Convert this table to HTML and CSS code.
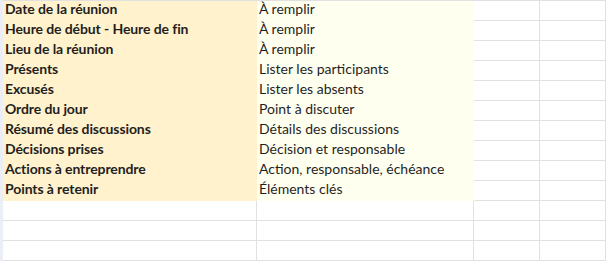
FILE: index.html
```html
<!DOCTYPE html>
<html lang="fr">
<head>
<meta charset="utf-8">
<link rel="stylesheet" href="styles.css">
</head>
<body>
<div class="sheet">
  <div class="strip"></div>
  <table class="grid">
    <colgroup>
      <col class="col-a"><col class="col-b"><col class="col-c"><col class="col-d">
    </colgroup>
    <tbody>
      <tr><td class="key">Date de la réunion</td><td class="val">À remplir</td><td></td><td></td></tr>
      <tr><td class="key">Heure de début - Heure de fin</td><td class="val">À remplir</td><td></td><td></td></tr>
      <tr><td class="key">Lieu de la réunion</td><td class="val">À remplir</td><td></td><td></td></tr>
      <tr><td class="key">Présents</td><td class="val">Lister les participants</td><td></td><td></td></tr>
      <tr><td class="key">Excusés</td><td class="val">Lister les absents</td><td></td><td></td></tr>
      <tr><td class="key">Ordre du jour</td><td class="val">Point à discuter</td><td></td><td></td></tr>
      <tr><td class="key">Résumé des discussions</td><td class="val">Détails des discussions</td><td></td><td></td></tr>
      <tr><td class="key">Décisions prises</td><td class="val">Décision et responsable</td><td></td><td></td></tr>
      <tr><td class="key">Actions à entreprendre</td><td class="val">Action, responsable, échéance</td><td></td><td></td></tr>
      <tr><td class="key">Points à retenir</td><td class="val">Éléments clés</td><td></td><td></td></tr>
      <tr><td></td><td></td><td></td><td></td></tr>
      <tr><td></td><td></td><td></td><td></td></tr>
      <tr><td></td><td></td><td></td><td></td></tr>
    </tbody>
  </table>
</div>
</body>
</html>
```

FILE: styles.css
```css
html, body {
  margin: 0;
  padding: 0;
  background: #ffffff;
}
.sheet {
  display: flex;
  width: 606px;
  height: 261px;
  overflow: hidden;
}
.strip {
  width: 3px;
  flex: none;
  background: #eceef5;
}
.grid {
  border-collapse: separate;
  border-spacing: 0;
  table-layout: fixed;
  width: 603px;
  border-top: 1px solid #e1e1e1;
  font-family: Lato, "Open Sans", sans-serif;
  font-size: 14px;
  color: #1f1f1f;
}
.col-a { width: 254px; }
.col-b { width: 217px; }
.col-c { width: 66px; }
.col-d { width: 66px; }
.grid td {
  height: 19px;
  padding: 0 0 0 2px;
  box-sizing: border-box;
  border-right: 1px solid #e1e1e1;
  border-bottom: 1px solid #e1e1e1;
  white-space: nowrap;
  overflow: hidden;
  line-height: 15px;
  vertical-align: top;
}
.grid tr { height: 20px; }
.grid td.key {
  background: #fff2cc;
  border-bottom-color: #fff2cc;
  border-right-color: #fff2cc;
  font-weight: 700;
  letter-spacing: -0.1px;
}
.grid td.val {
  background: #fffff0;
  border-bottom-color: #fffff0;
  border-right-color: #fffff0;
}
```
